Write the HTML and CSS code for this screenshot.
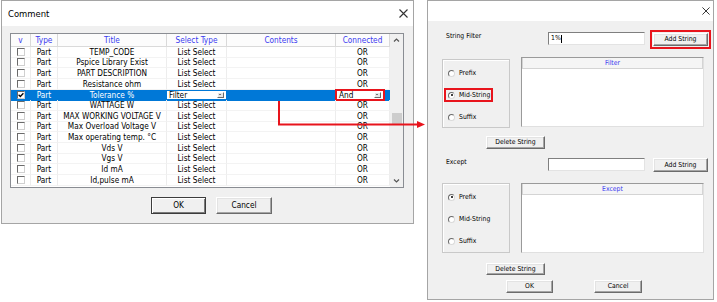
FILE: index.html
```html
<!DOCTYPE html>
<html lang="en">
<head>
  <meta charset="UTF-8">
  <title>Comment / String Filter</title>
  <link rel="stylesheet" href="styles.css">
</head>
<body>
<div class="stage">

  <!-- left: comment grid dialog -->
  <section class="dlg dlg-comment">
    <header class="titlebar">
      <span class="title">Comment</span>
      <svg class="close" viewBox="0 0 9 9"><path d="M0.5 0.5 8.5 8.5 M8.5 0.5 0.5 8.5" stroke="#333" stroke-width="1.1"/></svg>
    </header>
    <div class="body">
      <div class="grid">
        <div class="grid-rows">
          <div class="row head">
            <div class="cell">v</div><div class="cell">Type</div><div class="cell">Title</div>
            <div class="cell">Select Type</div><div class="cell">Contents</div><div class="cell">Connected</div>
          </div>
          <div class="row"><div class="cell"><span class="chk"></span></div><div class="cell">Part</div><div class="cell">TEMP_CODE</div><div class="cell">List Select</div><div class="cell"></div><div class="cell">OR</div></div>
          <div class="row"><div class="cell"><span class="chk"></span></div><div class="cell">Part</div><div class="cell">Pspice Library Exist</div><div class="cell">List Select</div><div class="cell"></div><div class="cell">OR</div></div>
          <div class="row"><div class="cell"><span class="chk"></span></div><div class="cell">Part</div><div class="cell">PART DESCRIPTION</div><div class="cell">List Select</div><div class="cell"></div><div class="cell">OR</div></div>
          <div class="row"><div class="cell"><span class="chk"></span></div><div class="cell">Part</div><div class="cell">Resistance ohm</div><div class="cell">List Select</div><div class="cell"></div><div class="cell">OR</div></div>
          <div class="row sel">
            <div class="cell"><span class="chk"><svg viewBox="0 0 6 6"><path d="M0.6 2.8 2.3 4.5 5.4 1.2" fill="none" stroke="#000" stroke-width="1.3"/></svg></span></div>
            <div class="cell">Part</div>
            <div class="cell">Tolerance %</div>
            <div class="cell"><div class="combo"><span>Filter</span><span class="drop"></span></div></div>
            <div class="cell"></div>
            <div class="cell"><div class="combo combo-mark"><span>And</span><span class="drop"></span></div></div>
          </div>
          <div class="row"><div class="cell"><span class="chk"></span></div><div class="cell">Part</div><div class="cell">WATTAGE W</div><div class="cell">List Select</div><div class="cell"></div><div class="cell">OR</div></div>
          <div class="row"><div class="cell"><span class="chk"></span></div><div class="cell">Part</div><div class="cell">MAX WORKING VOLTAGE V</div><div class="cell">List Select</div><div class="cell"></div><div class="cell">OR</div></div>
          <div class="row"><div class="cell"><span class="chk"></span></div><div class="cell">Part</div><div class="cell">Max Overload Voltage V</div><div class="cell">List Select</div><div class="cell"></div><div class="cell">OR</div></div>
          <div class="row"><div class="cell"><span class="chk"></span></div><div class="cell">Part</div><div class="cell">Max operating temp. °C</div><div class="cell">List Select</div><div class="cell"></div><div class="cell">OR</div></div>
          <div class="row"><div class="cell"><span class="chk"></span></div><div class="cell">Part</div><div class="cell">Vds V</div><div class="cell">List Select</div><div class="cell"></div><div class="cell">OR</div></div>
          <div class="row"><div class="cell"><span class="chk"></span></div><div class="cell">Part</div><div class="cell">Vgs V</div><div class="cell">List Select</div><div class="cell"></div><div class="cell">OR</div></div>
          <div class="row"><div class="cell"><span class="chk"></span></div><div class="cell">Part</div><div class="cell">Id mA</div><div class="cell">List Select</div><div class="cell"></div><div class="cell">OR</div></div>
          <div class="row"><div class="cell"><span class="chk"></span></div><div class="cell">Part</div><div class="cell">Id,pulse mA</div><div class="cell">List Select</div><div class="cell"></div><div class="cell">OR</div></div>
        </div>
        <div class="vscroll">
          <svg class="arrow" viewBox="0 0 13 13"><path d="M4 7.5 6.5 5 9 7.5" fill="none" stroke="#555" stroke-width="1.2"/></svg>
          <div class="track"><div class="thumb"></div></div>
          <svg class="arrow" viewBox="0 0 13 13"><path d="M4 5.5 6.5 8 9 5.5" fill="none" stroke="#555" stroke-width="1.2"/></svg>
        </div>
      </div>
      <div class="btns">
        <button class="btn btn-default">OK</button>
        <button class="btn">Cancel</button>
      </div>
    </div>
  </section>

  <!-- right: string filter dialog -->
  <section class="dlg dlg-filter">
    <header class="titlebar">
      <svg class="close" viewBox="0 0 9 9"><path d="M0.5 0.5 8.5 8.5 M8.5 0.5 0.5 8.5" stroke="#333" stroke-width="1.1"/></svg>
    </header>
    <div class="body">
      <div class="f-row">
        <span class="f-label">String Filter</span>
        <div class="field">1%<span class="caret"></span></div>
        <button class="btn btn-add btn-mark">Add String</button>
      </div>
      <div class="f-row f-lists">
        <div class="groupbox">
          <label class="radio"><span class="dot"></span>Prefix</label>
          <label class="radio radio-mark"><span class="dot on"></span>Mid-String</label>
          <label class="radio"><span class="dot"></span>Suffix</label>
        </div>
        <div class="listbox"><div class="list-head">Filter</div></div>
      </div>
      <div class="f-row f-del"><button class="btn btn-del">Delete String</button></div>

      <div class="f-row f-except">
        <span class="f-label">Except</span>
        <div class="field"></div>
        <button class="btn btn-add">Add String</button>
      </div>
      <div class="f-row f-lists f-lists2">
        <div class="groupbox">
          <label class="radio"><span class="dot on"></span>Prefix</label>
          <label class="radio"><span class="dot"></span>Mid-String</label>
          <label class="radio"><span class="dot"></span>Suffix</label>
        </div>
        <div class="listbox"><div class="list-head">Except</div></div>
      </div>
      <div class="f-row f-del f-del2"><button class="btn btn-del">Delete String</button></div>
      <div class="f-row f-ok">
        <button class="btn btn-ok">OK</button>
        <button class="btn btn-cancel">Cancel</button>
      </div>
    </div>
  </section>

  <!-- red callout arrow linking the two dialogs -->
  <svg class="callout" width="717" height="302" viewBox="0 0 717 302">
    <path d="M279 101 V124.5 H419" fill="none" stroke="#e8141c" stroke-width="2"/>
    <path d="M417 121 L425 124.5 L417 128 Z" fill="#e8141c"/>
  </svg>
</div>
</body>
</html>
```

FILE: styles.css
```css
* {
  box-sizing: border-box;
}

body {
  margin: 0;
  background: #fff;
  font-family: "DejaVu Sans Condensed", "DejaVu Sans", sans-serif;
  font-stretch: condensed;
  color: #000;
}

.stage {
  position: relative;
  width: 717px;
  height: 302px;
  display: flex;
  align-items: flex-start;
}

/* shared dialog frame */
.dlg {
  background: #f0f0f0;
  border: 1px solid #a5a5a5;
  display: flex;
  flex-direction: column;
}

.titlebar {
  flex: none;
  background: #fff;
  display: flex;
  align-items: center;
  justify-content: space-between;
}

.close {
  width: 9px;
  height: 9px;
  display: block;
}

.btn {
  font: inherit;
  color: #000;
  padding: 0;
  background: #f0f0f0;
  border: 1px solid;
  border-color: #fff #6b6b6b #6b6b6b #fff;
  box-shadow: inset -1px -1px 0 #a5a5a5, inset 1px 1px 0 #e3e3e3;
  line-height: 1;
}

/* ---------- comment dialog ---------- */
.dlg-comment {
  margin-left: 1px;
  width: 413px;
  height: 224px;
  font-size: 8.2px;
}

.dlg-comment .titlebar {
  height: 25px;
  padding: 0 5px 0 6px;
}

.title {
  font-size: 9.4px;
}

.dlg-comment .body {
  padding: 7px 0 0 8px;
}

.grid {
  width: 394px;
  height: 155px;
  border: 1px solid #8a8d93;
  background: #fff;
  display: flex;
}

.grid-rows {
  width: 379px;
}

.row {
  display: grid;
  grid-template-columns: 20px 27px 109px 60px 109px 54px;
  height: 10.667px;
}

.row.head {
  height: 13px;
}

.cell {
  display: flex;
  align-items: center;
  justify-content: center;
  white-space: nowrap;
  line-height: 1;
  border-right: 1px solid #ededed;
  border-bottom: 1px solid #f3f3f3;
}

.head .cell {
  color: #3a3af0;
  background: #fcfcfc;
  border-right-color: #d9d9d9;
  border-bottom-color: #dadada;
  padding-top: 1px;
}

.row.sel .cell {
  background: #0078d7;
  color: #fff;
  border-color: #0078d7;
}

.chk {
  width: 8px;
  height: 8px;
  background: #fff;
  border: 1px solid;
  border-color: #6a6a6a #d0d0d0 #d0d0d0 #6a6a6a;
  display: flex;
}

.chk svg {
  width: 6px;
  height: 6px;
}

.combo {
  width: 100%;
  height: 100%;
  background: #fff;
  color: #000;
  display: flex;
  align-items: center;
  justify-content: space-between;
  padding: 0 2px 0 2px;
}

.row.sel .cell:nth-child(4) {
  padding: 1px 0;
}

.combo-mark {
  margin: 1px 6px 1px 1px;
  height: auto;
  align-self: stretch;
  outline: 2px solid #e8141c;
}

.drop {
  width: 7px;
  height: 6px;
  background: #e6e6e6;
  border: 1px solid;
  border-color: #fff #6b6b6b #6b6b6b #fff;
  position: relative;
}

.drop::after {
  content: "";
  position: absolute;
  left: 1px;
  top: 1.5px;
  border-left: 1.5px solid transparent;
  border-right: 1.5px solid transparent;
  border-top: 1.5px solid #000;
}

.vscroll {
  width: 13px;
  background: #f0f0f0;
  display: flex;
  flex-direction: column;
}

.vscroll .arrow {
  width: 13px;
  height: 13px;
  flex: none;
}

.track {
  flex: 1;
  padding: 66px 0 0 2px;
}

.thumb {
  width: 10px;
  height: 12px;
  background: #cdcdcd;
}

.btns {
  display: flex;
  justify-content: center;
  gap: 10px;
  margin-top: 9px;
}

.dlg-comment .btn {
  width: 56px;
  height: 17px;
}

.dlg-comment .btn-default {
  width: 55px;
  border: 1px solid #3c3c3c;
  box-shadow: inset 1px 1px 0 #fff, inset -1px -1px 0 #7a7a7a;
}

/* ---------- string filter dialog ---------- */
.dlg-filter {
  margin-left: 13px;
  width: 287px;
  height: 300px;
  font-size: 6.8px;
}

.dlg-filter .titlebar {
  height: 20px;
  justify-content: flex-end;
  padding-right: 3px;
}

.dlg-filter .close {
  width: 8px;
  height: 8px;
}

.dlg-filter .body {
  padding: 11px 0 0 14px;
  display: flex;
  flex-direction: column;
}

.f-row {
  display: flex;
  align-items: flex-start;
}

.f-label {
  width: 106px;
  padding-left: 4px;
  line-height: 8px;
}

.field {
  width: 97px;
  height: 13px;
  background: #fff;
  border: 1px solid;
  border-color: #7f7f7f #e3e3e3 #e3e3e3 #7f7f7f;
  display: flex;
  align-items: center;
  padding-left: 2px;
  line-height: 1;
}

.caret {
  width: 1px;
  height: 8px;
  background: #000;
}

.btn-add {
  width: 55px;
  height: 13px;
  margin: 1px 0 0 8px;
}

.btn-mark {
  outline: 2px solid #e8141c;
  outline-offset: 1px;
}

.f-lists {
  margin-top: 11px;
}

.groupbox {
  width: 68px;
  height: 69px;
  margin-top: 2px;
  border: 1px solid #c9c9c9;
  box-shadow: inset 1px 1px 0 #fff;
  display: flex;
  flex-direction: column;
  align-items: flex-start;
  padding: 8px 0 0 3px;
  gap: 12px;
}

.radio {
  height: 10px;
  width: 45px;
  display: flex;
  align-items: center;
  padding-left: 2px;
  gap: 4px;
  line-height: 1;
}

.radio-mark {
  outline: 2px solid #e8141c;
}

.dot {
  width: 7px;
  height: 7px;
  border-radius: 50%;
  background: #fff;
  border: 1px solid;
  border-color: #6a6a6a #dadada #dadada #6a6a6a;
  position: relative;
}

.dot.on::after {
  content: "";
  position: absolute;
  left: 1.5px;
  top: 1.5px;
  width: 2px;
  height: 2px;
  border-radius: 50%;
  background: #000;
}

.listbox {
  width: 183px;
  height: 70px;
  margin-left: 11px;
  background: #fff;
  border: 1px solid;
  border-color: #9a9a9a #e0e0e0 #e0e0e0 #9a9a9a;
}

.list-head {
  height: 11px;
  background: #f5f5f5;
  border: 1px solid #d4d4d4;
  border-top: none;
  color: #3a3af0;
  text-align: center;
  line-height: 10px;
}

.f-del {
  margin-top: 8px;
  padding-left: 44px;
}

.btn-del {
  width: 59px;
  height: 13px;
}

.f-except {
  margin-top: 9px;
}

.f-except .btn-add {
  height: 14px;
  margin-top: 0;
}

.f-lists2 .groupbox {
  margin-top: 0;
  height: 70px;
}

.f-del2 {
  margin-top: 10px;
}

.f-del2 .btn-del {
  height: 12px;
}

.f-ok {
  margin-top: 5px;
  padding-left: 64px;
}

.btn-ok {
  width: 47px;
  height: 13px;
}

.btn-cancel {
  width: 48px;
  height: 13px;
  margin-left: 41px;
}

/* overlay */
.callout {
  position: absolute;
  left: 0;
  top: 0;
  pointer-events: none;
}
```
